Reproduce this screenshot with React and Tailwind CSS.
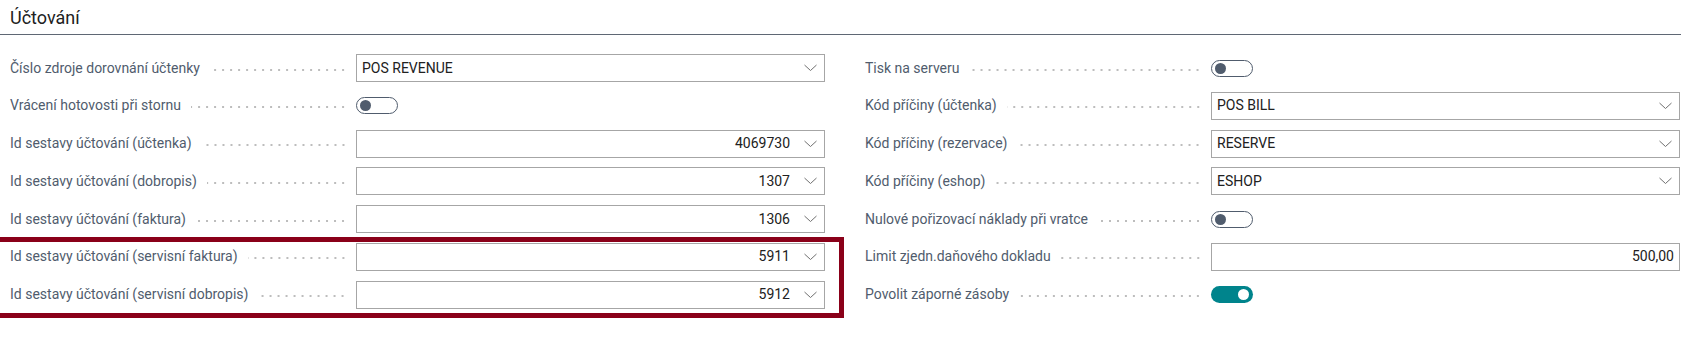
import { Fragment } from 'react';

const FONT = { fontFamily: '"Roboto", "Liberation Sans", sans-serif' };

const LEFT = [
  { label: 'Číslo zdroje dorovnání účtenky', type: 'select', value: 'POS REVENUE' },
  { label: 'Vrácení hotovosti při stornu', type: 'toggle', on: false },
  { label: 'Id sestavy účtování (účtenka)', type: 'lookup', value: '4069730' },
  { label: 'Id sestavy účtování (dobropis)', type: 'lookup', value: '1307' },
  { label: 'Id sestavy účtování (faktura)', type: 'lookup', value: '1306' },
  { label: 'Id sestavy účtování (servisní faktura)', type: 'lookup', value: '5911', marked: true },
  { label: 'Id sestavy účtování (servisní dobropis)', type: 'lookup', value: '5912', marked: true },
];

const RIGHT = [
  { label: 'Tisk na serveru', type: 'toggle', on: false },
  { label: 'Kód příčiny (účtenka)', type: 'select', value: 'POS BILL' },
  { label: 'Kód příčiny (rezervace)', type: 'select', value: 'RESERVE' },
  { label: 'Kód příčiny (eshop)', type: 'select', value: 'ESHOP' },
  { label: 'Nulové pořizovací náklady při vratce', type: 'toggle', on: false },
  { label: 'Limit zjedn.daňového dokladu', type: 'number', value: '500,00' },
  { label: 'Povolit záporné zásoby', type: 'toggle', on: true },
];

function Chevron() {
  return (
    <svg width="13" height="8" viewBox="0 0 13 8" className="shrink-0">
      <path d="M0.5 1 L6.5 6.5 L12.5 1" fill="none" stroke="#707070" strokeWidth="1" />
    </svg>
  );
}

function Toggle({ on }) {
  if (on) {
    return (
      <div className="w-[42px] h-[17px] rounded-full bg-[#00848c] flex items-center justify-end pr-[4px]">
        <div className="w-[11px] h-[11px] rounded-full bg-white" />
      </div>
    );
  }
  return (
    <div className="w-[42px] h-[17px] rounded-full border-[1.5px] border-[#505c6d] bg-white flex items-center pl-[3px]">
      <div className="w-[11px] h-[11px] rounded-full bg-[#505c6d]" />
    </div>
  );
}

function Control({ row }) {
  if (row.type === 'toggle') {
    return (
      <div className="h-[28px] flex items-center">
        <Toggle on={row.on} />
      </div>
    );
  }
  const box = 'h-[28px] border border-[#a6a6a6] bg-white flex items-center text-[14px] text-[#212121]';
  if (row.type === 'select') {
    return (
      <div className={`${box} pl-[5px] pr-[7px] justify-between`}>
        <span>{row.value}</span>
        <Chevron />
      </div>
    );
  }
  if (row.type === 'lookup') {
    return (
      <div className={`${box} pr-[7px] justify-end gap-[14px]`}>
        <span>{row.value}</span>
        <Chevron />
      </div>
    );
  }
  return (
    <div className={`${box} pr-[5px] justify-end`}>
      <span>{row.value}</span>
    </div>
  );
}

function Row({ row }) {
  return (
    <div className="grid grid-cols-[346px_469px] h-[28px] items-center">
      <div className="flex items-center pr-[9px] min-w-0">
        <span className="text-[14px] text-[#505c6d] whitespace-nowrap">{row.label}</span>
        <div className="flex-1 ml-[10px] h-[2px] mt-[3px] bg-[radial-gradient(circle,#bdbdbd_0.8px,transparent_1.1px)] bg-[length:8px_2px] bg-repeat-x bg-right" />
      </div>
      <Control row={row} />
    </div>
  );
}

function Column({ rows }) {
  const plain = rows.filter((r) => !r.marked);
  const marked = rows.filter((r) => r.marked);
  return (
    <div className="flex flex-col gap-y-[9.8px]">
      {plain.map((r) => <Row key={r.label} row={r} />)}
      {marked.length > 0 && (
        <div className="relative flex flex-col gap-y-[9.8px]">
          {marked.map((r) => <Row key={r.label} row={r} />)}
          <div className="absolute -left-[10px] -right-[19px] -top-[6px] -bottom-[9px] border-[5px] border-l-0 border-[#8a0019] pointer-events-none" />
        </div>
      )}
    </div>
  );
}

export default function App() {
  return (
    <div className="w-[1694px] h-[339px] bg-white overflow-hidden" style={FONT}>
      <div className="w-[1681px] border-b border-[#5f6774] h-[35px] pl-[10px] pt-[6px]">
        <h2 className="text-[18px] leading-[24px] text-[#212121]">Účtování</h2>
      </div>
      <div className="flex gap-[40px] pl-[10px] pt-[19px]">
        <Column rows={LEFT} />
        <Column rows={RIGHT} />
      </div>
    </div>
  );
}
